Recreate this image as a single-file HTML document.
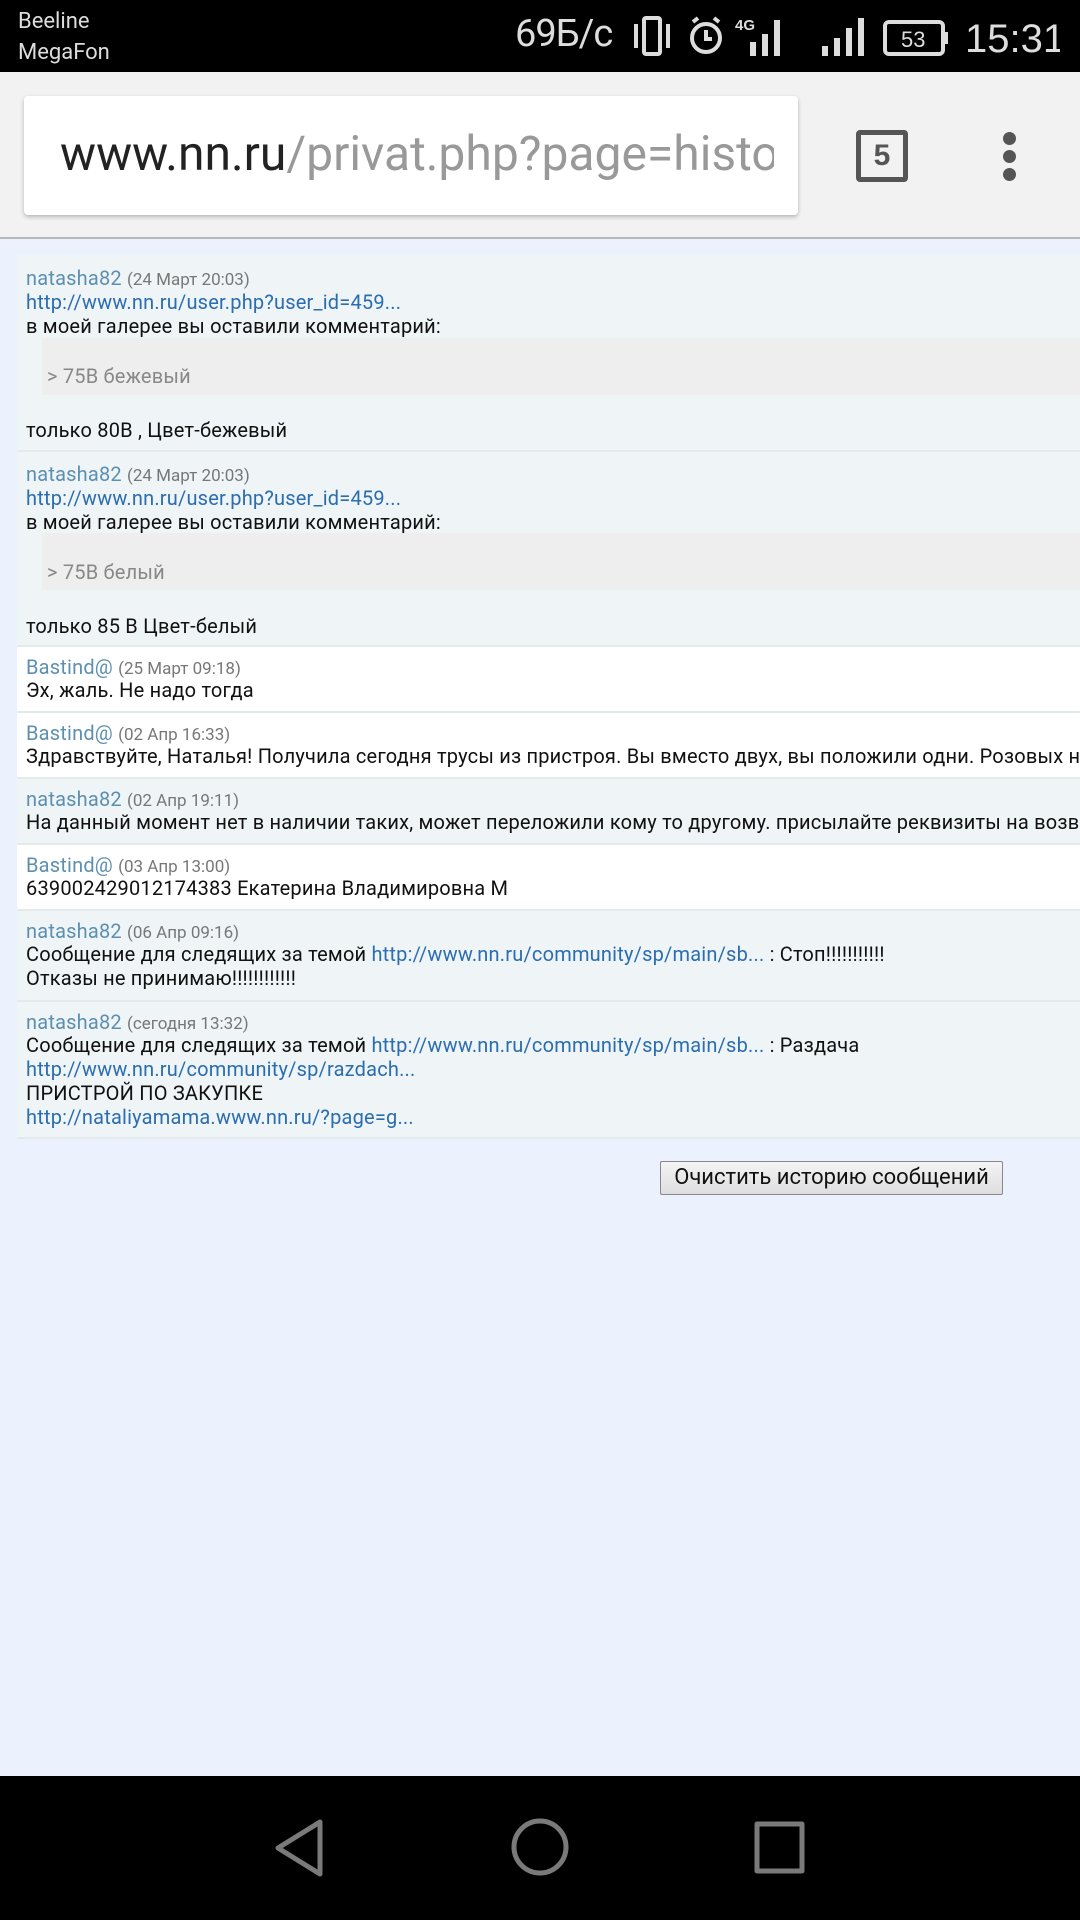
<!DOCTYPE html>
<html><head><meta charset="utf-8"><style>
*{margin:0;padding:0;box-sizing:border-box}
body{width:1080px;height:1920px;overflow:hidden;background:#ebf2fd;font-family:"Roboto","Liberation Sans","DejaVu Sans",sans-serif;position:relative;font-size:20px;letter-spacing:0.2px;color:#111}
.abs{position:absolute}
#sb{left:0;top:0;width:1080px;height:72px;background:#000;color:#ddd;letter-spacing:0}
#tb{left:0;top:72px;width:1080px;height:167px;background:#f2f2f2;border-bottom:2px solid #b8b8b8;letter-spacing:0}
.msg{position:absolute;left:17px;width:1063px;border-bottom:2px solid #e4e9ec;white-space:nowrap;overflow:hidden}
.g{background:#eff4f7}.w{background:#fff}
.l{position:absolute;left:9px;line-height:24px}
.n{color:#5d8fb0;font-size:20px}
.d{color:#777;font-size:17px;letter-spacing:0}
a{color:#2a6db0;text-decoration:none}
#nav{left:0;top:1776px;width:1080px;height:144px;background:#000}
</style></head><body>
<div id="sb" class="abs">
 <div class="abs" style="left:18px;top:6px;font-size:22px;line-height:31px;color:#ddd">Beeline<br>MegaFon</div>
 <div class="abs" style="left:515px;top:12px;font-size:38px;color:#ddd;letter-spacing:-1px">69Б/с</div>
 <svg class="abs" style="left:630px;top:14px" width="430" height="46" viewBox="0 0 430 46">
  <g fill="none" stroke="#ddd" stroke-width="4">
   <rect x="14" y="4" width="16" height="36" rx="2"/>
   <path d="M6 10v24M38 10v24"/>
   <circle cx="76" cy="24" r="14"/><path d="M76 16v9h6M63 8l5-4M89 8l-5-4"/>
   <rect x="255" y="8" width="58" height="32" rx="4"/><path d="M316 18v12"/>
  </g>
  <text x="105" y="16" font-size="15" font-weight="bold" fill="#ddd" font-family="Liberation Sans">4G</text>
  <g fill="#ddd"><rect x="120" y="28" width="6" height="14"/><rect x="132" y="20" width="6" height="22"/><rect x="144" y="6" width="6" height="36"/>
  <rect x="192" y="32" width="6" height="10"/><rect x="204" y="24" width="6" height="18"/><rect x="216" y="14" width="6" height="28"/><rect x="228" y="4" width="6" height="38"/></g>
  <text x="271" y="33" font-size="22" fill="#ddd" font-family="Liberation Sans">53</text>
  <text x="335" y="38" font-size="40" fill="#ddd" font-family="Liberation Sans">15:31</text>
 </svg>
</div>
<div id="tb" class="abs">
 <div class="abs" style="left:24px;top:24px;width:774px;height:119px;background:#fff;border-radius:4px;box-shadow:0 2px 4px rgba(0,0,0,.25)"></div>
 <div class="abs" style="left:60px;top:53px;font-size:48px;line-height:58px;color:#222;white-space:nowrap;width:714px;overflow:hidden">www.nn.ru<span style="color:#999">/privat.php?page=histo</span></div>
 <div class="abs" style="left:856px;top:58px;width:52px;height:52px;border:5px solid #555;border-radius:4px;text-align:center;font:bold 30px/42px 'Liberation Sans';color:#555">5</div>
 <div class="abs" style="left:1003px;top:60px;width:13px;height:13px;border-radius:50%;background:#555"></div>
 <div class="abs" style="left:1003px;top:78px;width:13px;height:13px;border-radius:50%;background:#555"></div>
 <div class="abs" style="left:1003px;top:96px;width:13px;height:13px;border-radius:50%;background:#555"></div>
</div>

<div class="msg g" style="top:255px;height:197px">
 <div class="l" style="top:11px"><span class="n">natasha82</span> <span class="d">(24 Март 20:03)</span></div>
 <div class="l" style="top:35px"><a>http://www.nn.ru/user.php?user_id=459...</a></div>
 <div class="l" style="top:59px">в моей галерее вы оставили комментарий:</div>
 <div class="abs" style="left:25px;top:83px;width:1040px;height:57px;background:#eee"></div>
 <div class="l" style="top:109px;left:30px;color:#888">&gt; 75B бежевый</div>
 <div class="l" style="top:163px">только 80В , Цвет-бежевый</div>
</div>
<div class="msg g" style="top:452px;height:195px">
 <div class="l" style="top:10px"><span class="n">natasha82</span> <span class="d">(24 Март 20:03)</span></div>
 <div class="l" style="top:34px"><a>http://www.nn.ru/user.php?user_id=459...</a></div>
 <div class="l" style="top:58px">в моей галерее вы оставили комментарий:</div>
 <div class="abs" style="left:25px;top:81px;width:1040px;height:57px;background:#eee"></div>
 <div class="l" style="top:108px;left:30px;color:#888">&gt; 75B белый</div>
 <div class="l" style="top:162px">только 85 В Цвет-белый</div>
</div>
<div class="msg w" style="top:647px;height:66px">
 <div class="l" style="top:8px"><span class="n">Bastind@</span> <span class="d">(25 Март 09:18)</span></div>
 <div class="l" style="top:31px">Эх, жаль. Не надо тогда</div>
</div>
<div class="msg w" style="top:713px;height:66px">
 <div class="l" style="top:8px"><span class="n">Bastind@</span> <span class="d">(02 Апр 16:33)</span></div>
 <div class="l" style="top:31px">Здравствуйте, Наталья! Получила сегодня трусы из пристроя. Вы вместо двух, вы положили одни. Розовых нет</div>
</div>
<div class="msg g" style="top:779px;height:66px">
 <div class="l" style="top:8px"><span class="n">natasha82</span> <span class="d">(02 Апр 19:11)</span></div>
 <div class="l" style="top:31px">На данный момент нет в наличии таких, может переложили кому то другому. присылайте реквизиты на возврат</div>
</div>
<div class="msg w" style="top:845px;height:66px">
 <div class="l" style="top:8px"><span class="n">Bastind@</span> <span class="d">(03 Апр 13:00)</span></div>
 <div class="l" style="top:31px">639002429012174383 Екатерина Владимировна М</div>
</div>
<div class="msg g" style="top:911px;height:91px">
 <div class="l" style="top:8px"><span class="n">natasha82</span> <span class="d">(06 Апр 09:16)</span></div>
 <div class="l" style="top:31px">Сообщение для следящих за темой <a>http://www.nn.ru/community/sp/main/sb...</a> : Стоп!!!!!!!!!!!</div>
 <div class="l" style="top:55px">Отказы не принимаю!!!!!!!!!!!!</div>
</div>
<div class="msg g" style="top:1002px;height:137px">
 <div class="l" style="top:8px"><span class="n">natasha82</span> <span class="d">(сегодня 13:32)</span></div>
 <div class="l" style="top:31px">Сообщение для следящих за темой <a>http://www.nn.ru/community/sp/main/sb...</a> : Раздача</div>
 <div class="l" style="top:55px"><a>http://www.nn.ru/community/sp/razdach...</a></div>
 <div class="l" style="top:79px">ПРИСТРОЙ ПО ЗАКУПКЕ</div>
 <div class="l" style="top:103px"><a>http://nataliyamama.www.nn.ru/?page=g...</a></div>
</div>
<div class="abs" style="left:660px;top:1161px;width:343px;height:34px;background:linear-gradient(#f4f4f4,#dedede);border:1px solid #888;border-radius:2px;text-align:center;font-size:22px;line-height:31px;color:#111;letter-spacing:0">Очистить историю сообщений</div>

<div id="nav" class="abs">
 <svg class="abs" style="left:0;top:0" width="1080" height="144">
  <g fill="none" stroke="#7a7a7a" stroke-width="5" stroke-linejoin="round">
   <path d="M320 46v52l-42-26z"/>
   <ellipse cx="540" cy="71" rx="26" ry="26"/>
   <rect x="757" y="48" width="45" height="47"/>
  </g>
 </svg>
</div>
</body></html>
